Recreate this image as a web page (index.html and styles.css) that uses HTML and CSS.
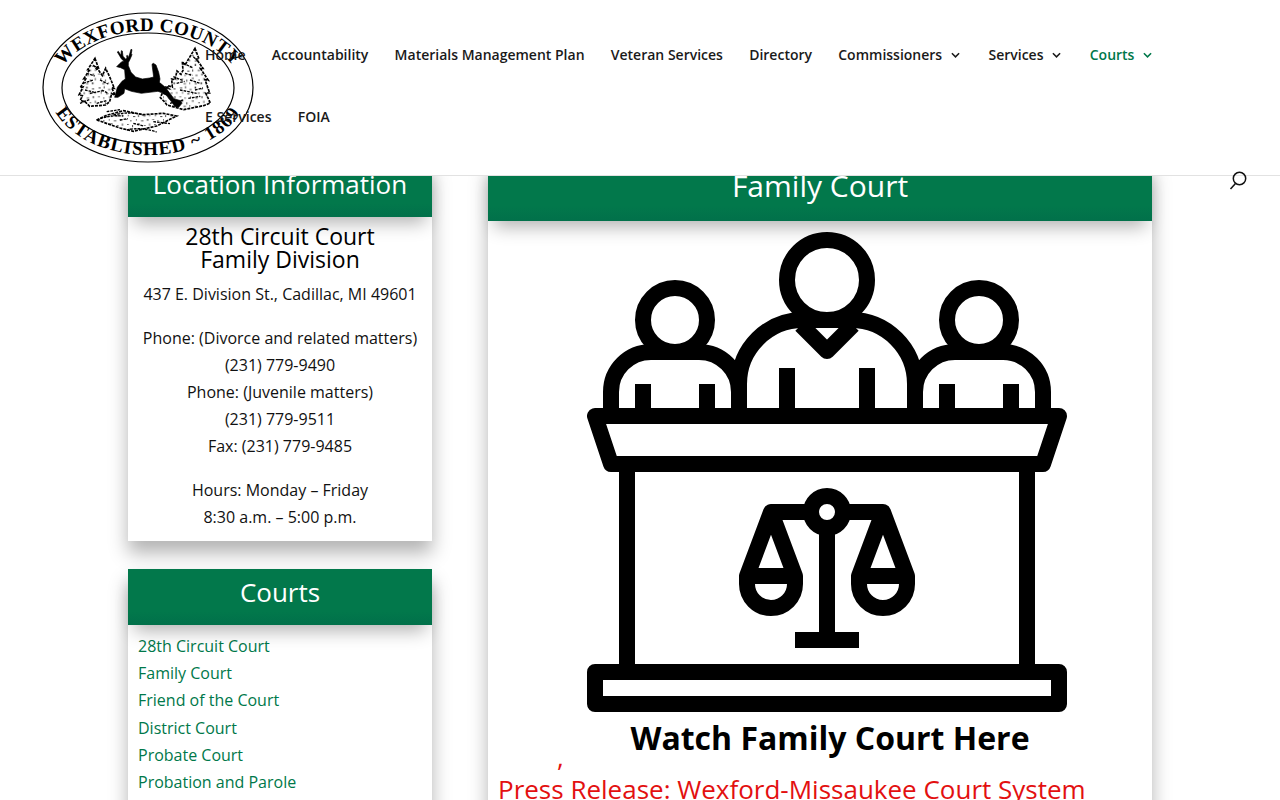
FILE: index.html
```html
<!DOCTYPE html>
<html lang="en">
<head>
  <meta charset="UTF-8" />
  <title>Family Court - Wexford County</title>
  <link rel="stylesheet" href="styles.css">
</head>
<body>

  <!-- Header -->
  <header class="site-header">
    <a class="logo" href="#" aria-label="Wexford County">
      <svg viewBox="0 0 214 152" width="214" height="152">
        <defs>
          <path id="ringTop" d="M13 78 A93 59 0 0 1 199 78"/>
          <path id="ringBottom" d="M6 74 A100 69 0 0 0 206 74"/>
          <pattern id="speck" width="37" height="31" patternUnits="userSpaceOnUse" patternTransform="scale(2.2)">
            <path d="M2 3h3v1H2zM9 1h1v3H9zM15 5h3v1h-3zM22 2h2v2h-2zM30 4h3v1h-3zM5 9h1v2H5zM12 11h3v1h-3zM19 9h1v3h-1zM26 10h3v1h-3zM34 9h1v2h-1zM1 15h3v1H1zM8 17h2v1H8zM16 15h1v2h-1zM23 17h3v1h-3zM31 15h2v2h-2zM4 22h2v1H4zM11 23h1v3h-1zM18 21h3v1h-3zM27 23h2v1h-2zM34 21h1v3h-1zM7 28h3v1H7zM15 27h1v2h-1zM22 28h3v1h-3zM30 27h2v2h-2z" fill="#000"/>
          </pattern>
        </defs>
        <ellipse cx="106" cy="75.5" rx="105" ry="74.5" class="ring"/>
        <ellipse cx="106" cy="76" rx="86" ry="55" class="ring"/>
        <text class="ring-text"><textPath href="#ringTop" startOffset="50%" text-anchor="middle">WEXFORD COUNTY</textPath></text>
        <text class="ring-text ring-text-low"><textPath href="#ringBottom" startOffset="50%" text-anchor="middle">ESTABLISHED ~ 1869</textPath></text>
        <!-- scene, drawn in the coordinates of a 3x crop -->
        <g transform="translate(28 28) scale(.3333)">
          <g class="scene-tree" fill="url(#speck)">
            <path d="M75 55l10 28-6-2 18 26 10-22 14 30 12 30-8-2 10 22-10-4-6 24-12 10-48 4-12-12-16-6 6-14-10-2 12-24-8 2 16-26-6 0 18-28-6 0z"/>
            <path d="M375 25l12 32-8 0 20 28-8 0 24 36-10-2 14 40-12 0 14 30-20 8-60 12-50-14-6-8-14-14 6-14 10 4 6-26 14 4-2-24 10 2 6-26 12 10 6-12-2-26 8 10z"/>
          </g>
          <path class="scene-tree" fill="url(#speck)" d="M80 240l30-14 50-14 60 12 60-4 40 8-60 30-70 16-40-10z"/>
          <path class="scene-line" d="M30 190l30-12M40 130l30-10M50 100l24 8M90 120l24 12M60 160l40-8M70 75l12 16M45 150l26 6M80 190l30-8M95 150l20 10M310 110l30 12M340 70l30 14M330 150l50 10M300 190l40-10M360 120l30 10M355 175l36-6M370 50l14 14M320 130l24-6M345 100l22 6M375 150l24-6M285 140l20 10M80 240q40-16 80-12M130 225q50-12 90 0M170 270q40-10 90 6M250 245l50 6M110 215l40-6M190 250l30 8M150 240l24-4"/>
          <path class="deer" d="M140 80l10-10 6-5 6-1-8-8-12-20 3-2 8 12 1-14 3 1 2 16 8 8 4-2-1-8 2-1 3 7 4-11 4-14 3 1-2 12 2 3-5 12-6 12 0 9 8 20 14 14 20 6 22-3 12-3-5-38 4-3 8 5 8 22 4 20-2 10 18 15 26 34 20 6 4 8-10 12-10-2-8-10-22-28-22-8-50 6-30-6-20-8-2 14-18 12-10 0 8-30 14-18 10-7-2-28-12-6z"/>
        </g>
      </svg>
    </a>
    <nav class="main-nav">
      <a href="#">Home</a>
      <a href="#">Accountability</a>
      <a href="#">Materials Management Plan</a>
      <a href="#">Veteran Services</a>
      <a href="#">Directory</a>
      <a href="#" class="has-sub">Commissioners <svg class="chev" viewBox="0 0 10 6"><path d="M1 1l4 4 4-4"/></svg></a>
      <a href="#" class="has-sub">Services <svg class="chev" viewBox="0 0 10 6"><path d="M1 1l4 4 4-4"/></svg></a>
      <a href="#" class="has-sub current">Courts <svg class="chev" viewBox="0 0 10 6"><path d="M1 1l4 4 4-4"/></svg></a>
      <a href="#">E Services</a>
      <a href="#">FOIA</a>
    </nav>
    <svg class="search-icon" viewBox="0 0 18 20" width="18" height="20">
      <circle cx="10.5" cy="7.5" r="6.2"/>
      <path d="M6.5 12.5L1.5 18"/>
    </svg>
  </header>

  <div class="page">
    <!-- Sidebar -->
    <aside class="sidebar">
      <section class="card">
        <h3 class="bar">Location Information</h3>
        <div class="location">
          <h4>28th Circuit Court<br>Family Division</h4>
          <p>437 E. Division St., Cadillac, MI 49601</p>
          <p>Phone: (Divorce and related matters)<br>(231) 779-9490<br>Phone: (Juvenile matters)<br>(231) 779-9511<br>Fax: (231) 779-9485</p>
          <p>Hours: Monday – Friday<br>8:30 a.m. – 5:00 p.m.</p>
        </div>
      </section>
      <section class="card">
        <h3 class="bar">Courts</h3>
        <ul class="court-links">
          <li><a href="#">28th Circuit Court</a></li>
          <li><a href="#">Family Court</a></li>
          <li><a href="#">Friend of the Court</a></li>
          <li><a href="#">District Court</a></li>
          <li><a href="#">Probate Court</a></li>
          <li><a href="#">Probation and Parole</a></li>
        </ul>
      </section>
    </aside>

    <!-- Main column -->
    <main class="main-col">
      <h1 class="bar bar-large">Family Court</h1>
      <div class="main-body">
        <a class="watch" href="#">
          <svg class="court-icon" viewBox="0 0 480 480" width="480" height="480">
            <circle cx="240" cy="48" r="40"/>
            <circle cx="88" cy="88" r="32"/>
            <circle cx="392" cy="88" r="32"/>
            <path d="M152 176V152a64 64 0 0 1 64-64h48a64 64 0 0 1 64 64v24"/>
            <path d="M214 93l26 26 26-26"/>
            <path d="M24 176v-16a40 40 0 0 1 40-40h48a40 40 0 0 1 40 40"/>
            <path d="M328 160a40 40 0 0 1 40-40h48a40 40 0 0 1 40 40v16"/>
            <path class="butt" d="M56 152v24M120 152v24M200 136v40M280 136v40M360 152v24M424 152v24"/>
            <path d="M8 184H472L456 232H24Z"/>
            <path class="butt" d="M40 240V432M440 240V432"/>
            <rect x="8" y="440" width="464" height="32"/>
            <circle cx="240" cy="280" r="16"/>
            <path class="butt" d="M240 296V408M208 408H272"/>
            <path d="M184 280H224M256 280H296"/>
            <path d="M160 344L184 280L208 344V352A24 24 0 0 1 160 352Z"/>
            <path d="M272 344L296 280L320 344V352A24 24 0 0 1 272 352Z"/>
            <path class="butt" d="M160 344H208M272 344H320"/>
          </svg>
          <span class="watch-label">Watch Family Court Here</span>
        </a>
        <div class="comma">,</div>
        <p class="press">Press Release: Wexford-Missaukee Court System</p>
      </div>
    </main>
  </div>

</body>
</html>
```
FILE: styles.css
```css
* {
  box-sizing: border-box;
}

html, body {
  height: 100%;
  overflow: hidden;
}

body {
  margin: 0;
  background: #fff;
  color: #111;
  font-family: "Open Sans", sans-serif;
  font-size: 16px;
  line-height: 27.2px;
}

a {
  color: inherit;
  text-decoration: none;
}

/* Header */
.site-header {
  position: fixed;
  top: 0;
  left: 0;
  right: 0;
  height: 176px;
  z-index: 10;
  background: #fff;
  border-bottom: 1px solid #e2e2e2;
  padding: 34px 120px 0 205px;
}

.logo {
  position: absolute;
  left: 42px;
  top: 12px;
  line-height: 0;
}

.ring {
  fill: none;
  stroke: #000;
  stroke-width: 1.2;
}

.ring-text {
  font-family: "Liberation Serif", serif;
  font-weight: 700;
  font-size: 19px;
  letter-spacing: 0.3px;
}

.ring-text-low {
  letter-spacing: 1.2px;
}

.scene-tree {
  stroke: #000;
  stroke-width: 5;
  stroke-dasharray: 9 3;
}

.scene-line {
  fill: none;
  stroke: #000;
  stroke-width: 4;
  stroke-dasharray: 8 3;
}

.deer {
  stroke: #000;
  stroke-width: 2;
}

.main-nav {
  position: relative;
  display: flex;
  flex-wrap: wrap;
  column-gap: 26.25px;
  row-gap: 20px;
  font-size: 14px;
  font-weight: 600;
  line-height: 42px;
  color: #1a1a1a;
}

.main-nav a {
  display: flex;
  align-items: center;
}

.main-nav .current {
  color: #00784a;
}

.chev {
  width: 9px;
  height: 6px;
  margin-left: 9px;
  margin-right: 2px;
  fill: none;
  stroke: currentColor;
  stroke-width: 1.7;
}

.search-icon {
  position: absolute;
  left: 1229px;
  top: 171px;
  fill: none;
  stroke: #111;
  stroke-width: 1.5;
  overflow: visible;
}

/* Columns */
.page {
  display: flex;
  gap: 56px;
  padding: 161px 128px 0;
}

.sidebar {
  width: 304px;
  display: flex;
  flex-direction: column;
  gap: 28px;
  flex-shrink: 0;
}

.main-col {
  width: 664px;
  box-shadow: 0 12px 18px rgba(0,0,0,0.3);
}

.card {
  background: #fff;
  box-shadow: 0 12px 18px rgba(0,0,0,0.3);
}

.bar {
  margin: 0;
  height: 56px;
  padding-top: 5px;
  background: linear-gradient(#02784b 75%, #01704a);
  color: #fff;
  font-size: 26px;
  font-weight: 400;
  line-height: 36px;
  text-align: center;
  box-shadow: 0 12px 18px -6px rgba(0,0,0,0.3);
  position: relative;
}

.bar-large {
  height: 60px;
  font-size: 30px;
  padding-top: 5px;
  line-height: 40px;
}

.location {
  padding: 8px 10px 10px;
  text-align: center;
  line-height: 27px;
}

.location h4 {
  margin: 0 0 10px;
  font-size: 23px;
  font-weight: 400;
  line-height: 23px;
  color: #000;
}

.location p {
  margin: 0 0 17px;
}

.location p:last-child {
  margin-bottom: 0;
}

.court-links {
  list-style: none;
  margin: 0;
  padding: 7.9px 10px 60px;
  color: #00784a;
}

/* Main body */
.main-body {
  background: #fff;
  padding: 11px 10px 60px;
}

.watch {
  display: flex;
  flex-direction: column;
  align-items: center;
  line-height: 0;
}

.court-icon {
  margin-left: 14px;
  fill: none;
  stroke: #000;
  stroke-width: 16;
  stroke-linejoin: round;
}

.court-icon .butt {
  stroke-linecap: butt;
}

.watch-label {
  margin: 8px 0 0 20px;
  color: #000;
  font-size: 32px;
  font-weight: 700;
  line-height: 36px;
  white-space: nowrap;
}

.comma {
  height: 17px;
  padding-left: 59px;
  color: #e31010;
  font-size: 26px;
  line-height: 3px;
}

.press {
  margin: 0;
  color: #e31010;
  font-size: 26px;
  line-height: 32px;
}
```
